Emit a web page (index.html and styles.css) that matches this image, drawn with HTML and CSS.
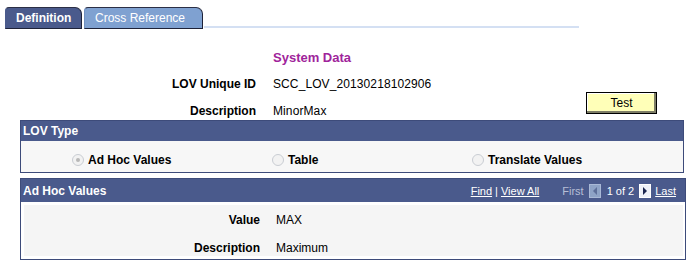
FILE: index.html
```html
<!DOCTYPE html>
<html>
<head>
<meta charset="utf-8">
<link rel="stylesheet" href="styles.css">
</head>
<body>
<div class="tabs">
  <div class="tab tab-active">Definition</div>
  <div class="tab tab-inactive">Cross Reference</div>
  <div class="tab-line"></div>
</div>

<div class="sysdata">
  <div class="cell"></div>
  <div class="cell val title">System Data</div>
  <div class="cell"></div>
  <div class="cell lbl">LOV Unique ID</div>
  <div class="cell val">SCC_LOV_20130218102906</div>
  <div class="btn-cell"><button class="btn">Test</button></div>
  <div class="cell lbl">Description</div>
  <div class="cell val">MinorMax</div>
</div>

<div class="box box-lov">
  <div class="box-head">LOV Type</div>
  <div class="lov-body">
    <div class="opt"><span class="radio radio-on"></span><span class="opt-lbl">Ad Hoc Values</span></div>
    <div class="opt"><span class="radio"></span><span class="opt-lbl">Table</span></div>
    <div class="opt"><span class="radio"></span><span class="opt-lbl">Translate Values</span></div>
  </div>
</div>

<div class="box box-adhoc">
  <div class="box-head head-adhoc">
    <span class="head-title">Ad Hoc Values</span>
    <span class="nav">
      <a class="lnk">Find</a><span class="sep">|</span><a class="lnk">View All</a>
      <span class="first">First</span>
      <svg class="ico" width="12" height="14" viewBox="0 0 12 14"><rect x="0.5" y="0.5" width="11" height="13" fill="#8ea3c6" stroke="#a9b9d6"/><polygon points="8,3 4,7 8,11" fill="#5d6f99"/></svg>
      <span class="count">1 of 2</span>
      <svg class="ico ico-next" width="12" height="14" viewBox="0 0 12 14"><rect x="0.5" y="0.5" width="11" height="13" fill="#eef1f8" stroke="#ffffff"/><polygon points="4,3 8,7 4,11" fill="#1b2650"/></svg>
      <a class="lnk last">Last</a>
    </span>
  </div>
  <div class="adhoc-body">
    <div class="panel">
      <div class="pl">Value</div>
      <div class="pv">MAX</div>
      <div class="pl">Description</div>
      <div class="pv">Maximum</div>
    </div>
  </div>
</div>
</body>
</html>
```

FILE: styles.css
```css
body {
  margin: 0;
  background: #ffffff;
  font-family: "Liberation Sans", Arial, sans-serif;
  font-size: 12px;
  color: #000000;
}

.tabs {
  display: flex;
  align-items: flex-end;
  padding-left: 5px;
  padding-top: 7px;
  height: 22px;
}

.tab {
  line-height: 21px;
  color: #ffffff;
  font-size: 12px;
  box-sizing: border-box;
  border-top: 1px solid #2b2f45;
  border-right: 1px solid #1e2238;
  border-bottom: 1px solid #1e2238;
  border-radius: 4px 7px 0 0;
  height: 22px;
}

.tab-active {
  width: 77px;
  background: #4a5a8c;
  font-weight: bold;
  padding-left: 10px;
  border-left: 1px solid #4a5a8c;
}

.tab-inactive {
  width: 119px;
  margin-left: 2px;
  background: #7fa1d1;
  padding-left: 10px;
  border-left: 1px solid #6f8fc0;
}

.tab-line {
  width: 375px;
  height: 2px;
  background: #d4e0f3;
  margin-left: 1px;
  margin-bottom: 1px;
}

.sysdata {
  display: grid;
  grid-template-columns: 256px 330px 71px;
  grid-template-rows: 27px 27px 22px;
  padding-top: 15px;
}

.cell {
  line-height: 27px;
  white-space: nowrap;
}

.lbl {
  text-align: right;
  font-weight: bold;
}

.val {
  padding-left: 17px;
  letter-spacing: 0.1px;
}

.title {
  color: #a0249b;
  font-weight: bold;
  font-size: 13px;
  letter-spacing: 0;
}

.btn-cell {
  grid-column: 3;
  grid-row: 2 / span 2;
  padding-top: 21px;
}

.btn {
  width: 71px;
  height: 22px;
  margin: 0;
  padding: 0;
  box-sizing: border-box;
  background: #ffffb8;
  border: 1px solid #000000;
  box-shadow: inset -2px -2px 0 #7d7d66, inset 1px 1px 0 #ffffff;
  font-family: "Liberation Sans", Arial, sans-serif;
  font-size: 12px;
  color: #000000;
  line-height: 19px;
}

.box {
  margin-left: 20px;
  box-sizing: border-box;
  border: 1px solid #3d4b7a;
}

.box-lov {
  width: 664px;
}

.box-head {
  background: #4a5a8c;
  color: #ffffff;
  font-weight: bold;
  height: 20px;
  line-height: 21px;
  padding-left: 2px;
}

.lov-body {
  background: #f7f7f7;
  height: 31px;
  display: flex;
  align-items: center;
  padding-left: 51px;
  padding-top: 7px;
  box-sizing: border-box;
}

.opt {
  width: 200px;
  display: flex;
  align-items: center;
}

.radio {
  width: 12px;
  height: 12px;
  box-sizing: border-box;
  border-radius: 50%;
  border: 1px solid #c9cdd3;
  background: #f2f2f2;
  margin-right: 4px;
  position: relative;
}

.radio-on::after {
  content: "";
  position: absolute;
  left: 3px;
  top: 3px;
  width: 4px;
  height: 4px;
  border-radius: 50%;
  background: #b8b8b8;
}

.opt-lbl {
  font-weight: bold;
}

.box-adhoc {
  width: 666px;
  margin-top: 5px;
}

.head-adhoc {
  height: 23px;
  line-height: 24px;
  display: flex;
  justify-content: space-between;
}

.nav {
  display: flex;
  align-items: center;
  font-weight: normal;
  font-size: 11px;
  padding-right: 9px;
}

.lnk {
  color: #ffffff;
  text-decoration: underline;
}

.sep {
  margin: 0 3px 0 3px;
}

.first {
  color: #b7bfd6;
  margin-left: 23px;
  margin-right: 5px;
}

.ico {
  display: block;
}

.count {
  margin: 0 5px 0 6px;
}

.last {
  margin-left: 4px;
}

.adhoc-body {
  background: #ffffff;
  padding: 3px 2px 3px 3px;
}

.panel {
  background: #f5f5f5;
  display: grid;
  grid-template-columns: 236px 1fr;
  grid-template-rows: 28px 22px;
  padding-top: 1px;
}

.pl {
  text-align: right;
  font-weight: bold;
  line-height: 28px;
}

.pv {
  padding-left: 16px;
  line-height: 28px;
}
```
